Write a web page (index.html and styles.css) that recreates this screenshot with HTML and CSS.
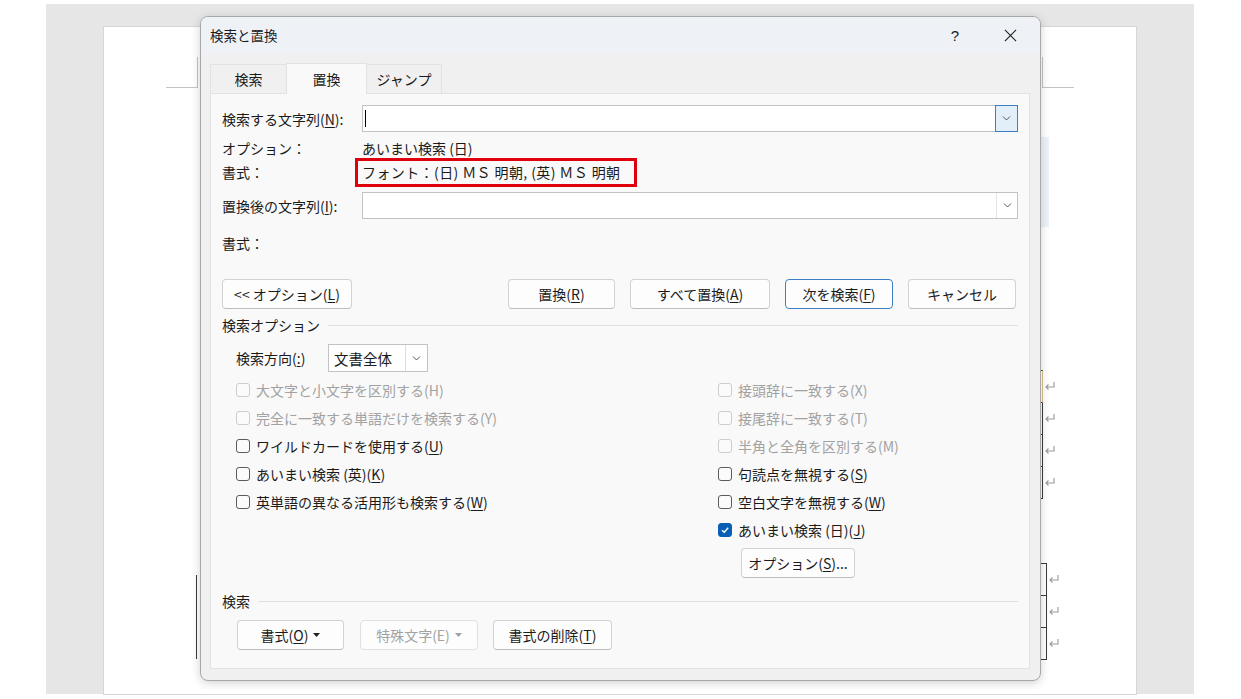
FILE: index.html
```html
<!DOCTYPE html>
<html lang="ja">
<head>
<meta charset="utf-8">
<title>検索と置換</title>
<link rel="stylesheet" href="styles.css">
</head>
<body>
<div class="workspace">
  <div class="page">
    <span class="mark mark-tl"></span>
    <span class="mark mark-tr"></span>
    <span class="tint"></span>
    <div class="cells cells-a">
      <div class="cell"><svg class="ret" viewBox="0 0 12 10"><path d="M10 1 V6 H2 M4.5 3.5 L2 6 L4.5 8.5"/></svg></div>
      <div class="cell"><svg class="ret" viewBox="0 0 12 10"><path d="M10 1 V6 H2 M4.5 3.5 L2 6 L4.5 8.5"/></svg></div>
      <div class="cell"><svg class="ret" viewBox="0 0 12 10"><path d="M10 1 V6 H2 M4.5 3.5 L2 6 L4.5 8.5"/></svg></div>
      <div class="cell"><svg class="ret" viewBox="0 0 12 10"><path d="M10 1 V6 H2 M4.5 3.5 L2 6 L4.5 8.5"/></svg></div>
    </div>
    <div class="cells cells-b">
      <div class="cell"><svg class="ret" viewBox="0 0 12 10"><path d="M10 1 V6 H2 M4.5 3.5 L2 6 L4.5 8.5"/></svg></div>
      <div class="cell"><svg class="ret" viewBox="0 0 12 10"><path d="M10 1 V6 H2 M4.5 3.5 L2 6 L4.5 8.5"/></svg></div>
      <div class="cell"><svg class="ret" viewBox="0 0 12 10"><path d="M10 1 V6 H2 M4.5 3.5 L2 6 L4.5 8.5"/></svg></div>
    </div>
    <div class="leftcells"></div>
  </div>
</div>

<div class="dialog">
  <div class="titlebar">
    <span class="title">検索と置換</span>
    <span class="tbtn help">?</span>
    <span class="tbtn close"><svg viewBox="0 0 14 14"><path d="M1 1 L13 13 M13 1 L1 13"/></svg></span>
  </div>

  <div class="tabs">
    <span class="tab t1">検索</span>
    <span class="tab t2 active">置換</span>
    <span class="tab t3">ジャンプ</span>
  </div>

  <div class="panel">
    <div class="field">
      <span class="flabel">検索する文字列(<u>N</u>):</span>
      <div class="combo">
        <span class="caret"></span>
        <span class="drop focus"><svg viewBox="0 0 9 5"><path d="M1 0.5 L4.5 4 L8 0.5"/></svg></span>
      </div>
    </div>
    <div class="info">
      <div class="iline"><span class="flabel">オプション：</span><span>あいまい検索 (日)</span></div>
      <div class="iline"><span class="flabel">書式：</span><span class="hl">フォント：(日) ＭＳ 明朝, (英) ＭＳ 明朝</span></div>
    </div>
    <div class="field f2">
      <span class="flabel">置換後の文字列(<u>I</u>):</span>
      <div class="combo">
        <span class="drop"><svg viewBox="0 0 9 5"><path d="M1 0.5 L4.5 4 L8 0.5"/></svg></span>
      </div>
    </div>
    <div class="iline fmt2"><span class="flabel">書式：</span></div>

    <div class="actions">
      <button class="btn w-opt">&lt;&lt; オプション(<u>L</u>)</button>
      <span class="spacer"></span>
      <button class="btn w-rep">置換(<u>R</u>)</button>
      <button class="btn w-all">すべて置換(<u>A</u>)</button>
      <button class="btn w-next default">次を検索(<u>F</u>)</button>
      <button class="btn w-cancel">キャンセル</button>
    </div>

    <div class="group g1"><span>検索オプション</span></div>

    <div class="dirrow">
      <span class="dirlabel">検索方向(<u>:</u>)</span>
      <div class="select"><span class="sval">文書全体</span><span class="sdrop"><svg viewBox="0 0 9 5"><path d="M1 0.5 L4.5 4 L8 0.5"/></svg></span></div>
    </div>

    <div class="checks">
      <div class="ccol left">
        <label class="chk disabled"><span class="box"></span>大文字と小文字を区別する(H)</label>
        <label class="chk disabled"><span class="box"></span>完全に一致する単語だけを検索する(Y)</label>
        <label class="chk"><span class="box"></span>ワイルドカードを使用する(<u>U</u>)</label>
        <label class="chk"><span class="box"></span>あいまい検索 (英)(<u>K</u>)</label>
        <label class="chk"><span class="box"></span>英単語の異なる活用形も検索する(<u>W</u>)</label>
      </div>
      <div class="ccol right">
        <label class="chk disabled"><span class="box"></span>接頭辞に一致する(X)</label>
        <label class="chk disabled"><span class="box"></span>接尾辞に一致する(T)</label>
        <label class="chk disabled"><span class="box"></span>半角と全角を区別する(M)</label>
        <label class="chk"><span class="box"></span>句読点を無視する(<u>S</u>)</label>
        <label class="chk"><span class="box"></span>空白文字を無視する(<u>W</u>)</label>
        <label class="chk"><span class="box checked"><svg viewBox="0 0 10 10"><path d="M2 5.2 L4.2 7.3 L8.2 2.8"/></svg></span>あいまい検索 (日)(<u>J</u>)</label>
        <button class="btn w-fopt">オプション(<u>S</u>)...</button>
      </div>
    </div>

    <div class="group g2"><span>検索</span></div>

    <div class="bottom">
      <button class="btn w-fmt">書式(<u>O</u>)<svg class="tri" viewBox="0 0 7 4"><path d="M0 0 H7 L3.5 4 Z"/></svg></button>
      <button class="btn w-spec disabledbtn">特殊文字(E)<svg class="tri" viewBox="0 0 7 4"><path d="M0 0 H7 L3.5 4 Z"/></svg></button>
      <button class="btn w-clear">書式の削除(<u>T</u>)</button>
    </div>
  </div>
</div>
</body>
</html>
```

FILE: styles.css
```css
html, body {
  margin: 0;
  height: 699px;
  overflow: hidden;
  background: #ffffff;
}
body {
  padding-top: 4px;
  box-sizing: border-box;
  font-family: "Noto Sans CJK JP", "Noto Sans", sans-serif;
}

.workspace {
  margin-left: 46px;
  width: 1148px;
  height: 690px;
  box-sizing: border-box;
  padding: 23px 0 0 58px;
  background: #e6e6e6;
}
.page {
  position: relative;
  width: 1032px;
  height: 667px;
  background: #ffffff;
  box-shadow: 0 0 0 1px #d6d6d6;
}
.mark {
  position: absolute;
  top: 30px;
  width: 31px;
  height: 30px;
  border-bottom: 1px solid #c4c4c4;
}
.mark-tl { left: 62px; border-right: 1px solid #c4c4c4; }
.mark-tr { left: 938px; border-left: 1px solid #c4c4c4; }
.tint {
  position: absolute;
  left: 936px;
  top: 110px;
  width: 9px;
  height: 90px;
  background: #edf2fa;
}
.cells {
  position: absolute;
  display: flex;
  flex-direction: column;
}
.cells-a { left: 918px; top: 343px; }
.cells-b { left: 922px; top: 536px; }
.cell {
  position: relative;
  width: 20px;
  height: 31px;
  border-right: 1px solid #3a3a3a;
  border-bottom: 1px solid #3a3a3a;
}
.cells-a .cell:first-child { border-top: 1px solid #3a3a3a; border-right-color: #d9c48a; }
.cells-b .cell:first-child { border-top: 1px solid #3a3a3a; }
.ret {
  position: absolute;
  left: 22px;
  top: 10px;
  width: 12px;
  height: 10px;
  fill: none;
  stroke: #9a9a9a;
  stroke-width: 1.1;
}
.leftcells {
  position: absolute;
  left: 92px;
  top: 548px;
  width: 1px;
  height: 84px;
  background: #3a3a3a;
}

/* dialog */
.dialog {
  position: absolute;
  left: 200px;
  top: 16px;
  width: 841px;
  height: 665px;
  box-sizing: border-box;
  border: 1px solid #a8a8a8;
  border-radius: 8px;
  background: #f0f0f0;
  overflow: hidden;
  display: flex;
  flex-direction: column;
  font-size: 14px;
  color: #1b1b1b;
  box-shadow: 0 2px 10px rgba(0,0,0,0.18);
}
.titlebar {
  height: 36px;
  display: flex;
  align-items: center;
  padding-left: 9px;
  background: #eef2f7;
}
.title { flex: 1; font-size: 13.5px; }
.tbtn {
  width: 46px;
  height: 36px;
  display: flex;
  align-items: center;
  justify-content: center;
}
.help { margin-right: 9px; font-size: 15px; font-family: "Liberation Sans", sans-serif; }
.close { margin-right: 7px; }
.close svg { width: 13px; height: 13px; fill: none; stroke: #222; stroke-width: 1.2; }

.tabs {
  display: flex;
  align-items: flex-end;
  margin-top: 10px;
  padding-left: 9px;
  height: 30px;
}
.tab {
  height: 29px;
  box-sizing: border-box;
  display: flex;
  align-items: center;
  justify-content: center;
  border: 1px solid #e2e2e2;
  border-bottom: none;
  background: #f0f0f0;
}
.t1 { width: 76px; border-right: none; }
.t2 { width: 81px; }
.t3 { width: 75px; border-left: none; }
.tab.active {
  background: #f9f9f9;
  position: relative;
  z-index: 1;
  margin-bottom: -1px;
  height: 31px;
}

.panel {
  margin: 0 10px 0 9px;
  height: 576px;
  box-sizing: border-box;
  background: #f9f9f9;
  border: 1px solid #e2e2e2;
  padding: 11px 11px 0 11px;
  display: flex;
  flex-direction: column;
}
.field {
  display: flex;
  align-items: center;
  height: 27px;
}
.f2 { margin-top: 8px; }
.flabel { width: 140px; flex: none; }
.combo {
  flex: 1;
  height: 27px;
  box-sizing: border-box;
  border: 1px solid #c2c2c2;
  background: #ffffff;
  display: flex;
  justify-content: space-between;
  align-items: stretch;
}
.caret {
  width: 1px;
  margin: 4px 0 4px 2px;
  background: #000;
}
.drop {
  margin-left: auto;
  width: 21px;
  box-sizing: border-box;
  display: flex;
  align-items: center;
  justify-content: center;
  border-left: 1px solid #e4e4e4;
}
.drop.focus {
  border: 1px solid #3d7fc6;
  background: #e3eefb;
  margin: -1px -1px -1px auto;
  width: 23px;
}
.drop svg, .sdrop svg { width: 9px; height: 5px; fill: none; stroke: #555; stroke-width: 1; }

.info { margin-top: 4px; }
.iline {
  display: flex;
  align-items: center;
  height: 24px;
}
.hl {
  width: 282px;
  height: 29px;
  box-sizing: border-box;
  border: 3px solid #e0000d;
  padding: 0 0 0 4px;
  margin-left: -7px;
  display: flex;
  align-items: center;
  flex: none;
  letter-spacing: 0.4px;
}
.fmt2 { margin-top: 12px; }

.actions {
  display: flex;
  margin-top: 24px;
  height: 30px;
  padding-right: 2px;
}
.spacer { flex: 1; }
.btn {
  height: 30px;
  box-sizing: border-box;
  border: 1px solid #d2d2d2;
  border-bottom-color: #bdbdbd;
  border-radius: 4px;
  background: #fdfdfd;
  font-family: inherit;
  font-size: 14px;
  color: #1b1b1b;
  padding: 0;
  display: flex;
  align-items: center;
  justify-content: center;
}
.btn.default { border: 1px solid #3b80c6; }
.w-opt { width: 130px; }
.w-rep { width: 107px; }
.w-all { width: 140px; margin-left: 15px; }
.w-next { width: 108px; margin-left: 15px; }
.w-cancel { width: 108px; margin-left: 15px; }

.group {
  display: flex;
  align-items: center;
  height: 20px;
  gap: 8px;
}
.group::after {
  content: "";
  flex: 1;
  height: 1px;
  background: #e0e0e0;
}
.g1 { margin-top: 6px; }
.g2 { margin-top: 13px; }

.dirrow {
  display: flex;
  align-items: center;
  margin-top: 9px;
  padding-left: 14px;
  height: 28px;
}
.dirlabel { width: 92px; }
.select {
  width: 100px;
  height: 28px;
  box-sizing: border-box;
  border: 1px solid #c2c2c2;
  background: #ffffff;
  display: flex;
}
.sval { flex: 1; padding-left: 5px; display: flex; align-items: center; font-size: 14.5px; }
.sdrop {
  width: 21px;
  border-left: 1px solid #dcdcdc;
  display: flex;
  align-items: center;
  justify-content: center;
}

.checks {
  display: flex;
  margin-top: 4px;
  padding-left: 14px;
}
.ccol { display: flex; flex-direction: column; }
.ccol.left { width: 482px; }
.chk {
  display: flex;
  align-items: center;
  height: 28px;
}
.box {
  width: 14px;
  height: 14px;
  box-sizing: border-box;
  border: 1px solid #5c5c5c;
  border-radius: 3px;
  background: #fbfbfb;
  margin-right: 6px;
  display: flex;
  align-items: center;
  justify-content: center;
}
.disabled { color: #a2a2a2; }
.disabled .box { border-color: #cdcdcd; }
.box.checked { background: #0a5fb5; border-color: #0a5fb5; }
.box.checked svg { width: 10px; height: 10px; fill: none; stroke: #ffffff; stroke-width: 1.3; }
.w-fopt { width: 114px; margin: 4px 0 0 23px; }

.bottom {
  display: flex;
  margin-top: 9px;
  padding-left: 15px;
}
.w-fmt { width: 107px; }
.w-spec { width: 118px; margin-left: 16px; }
.w-clear { width: 119px; margin-left: 15px; }
.tri { width: 7px; height: 4px; margin-left: 5px; fill: #222; }
.disabledbtn { color: #a2a2a2; border-color: #e0e0e0; }
.disabledbtn .tri { fill: #a2a2a2; }
u { text-decoration: underline; text-underline-offset: 2px; }
```
